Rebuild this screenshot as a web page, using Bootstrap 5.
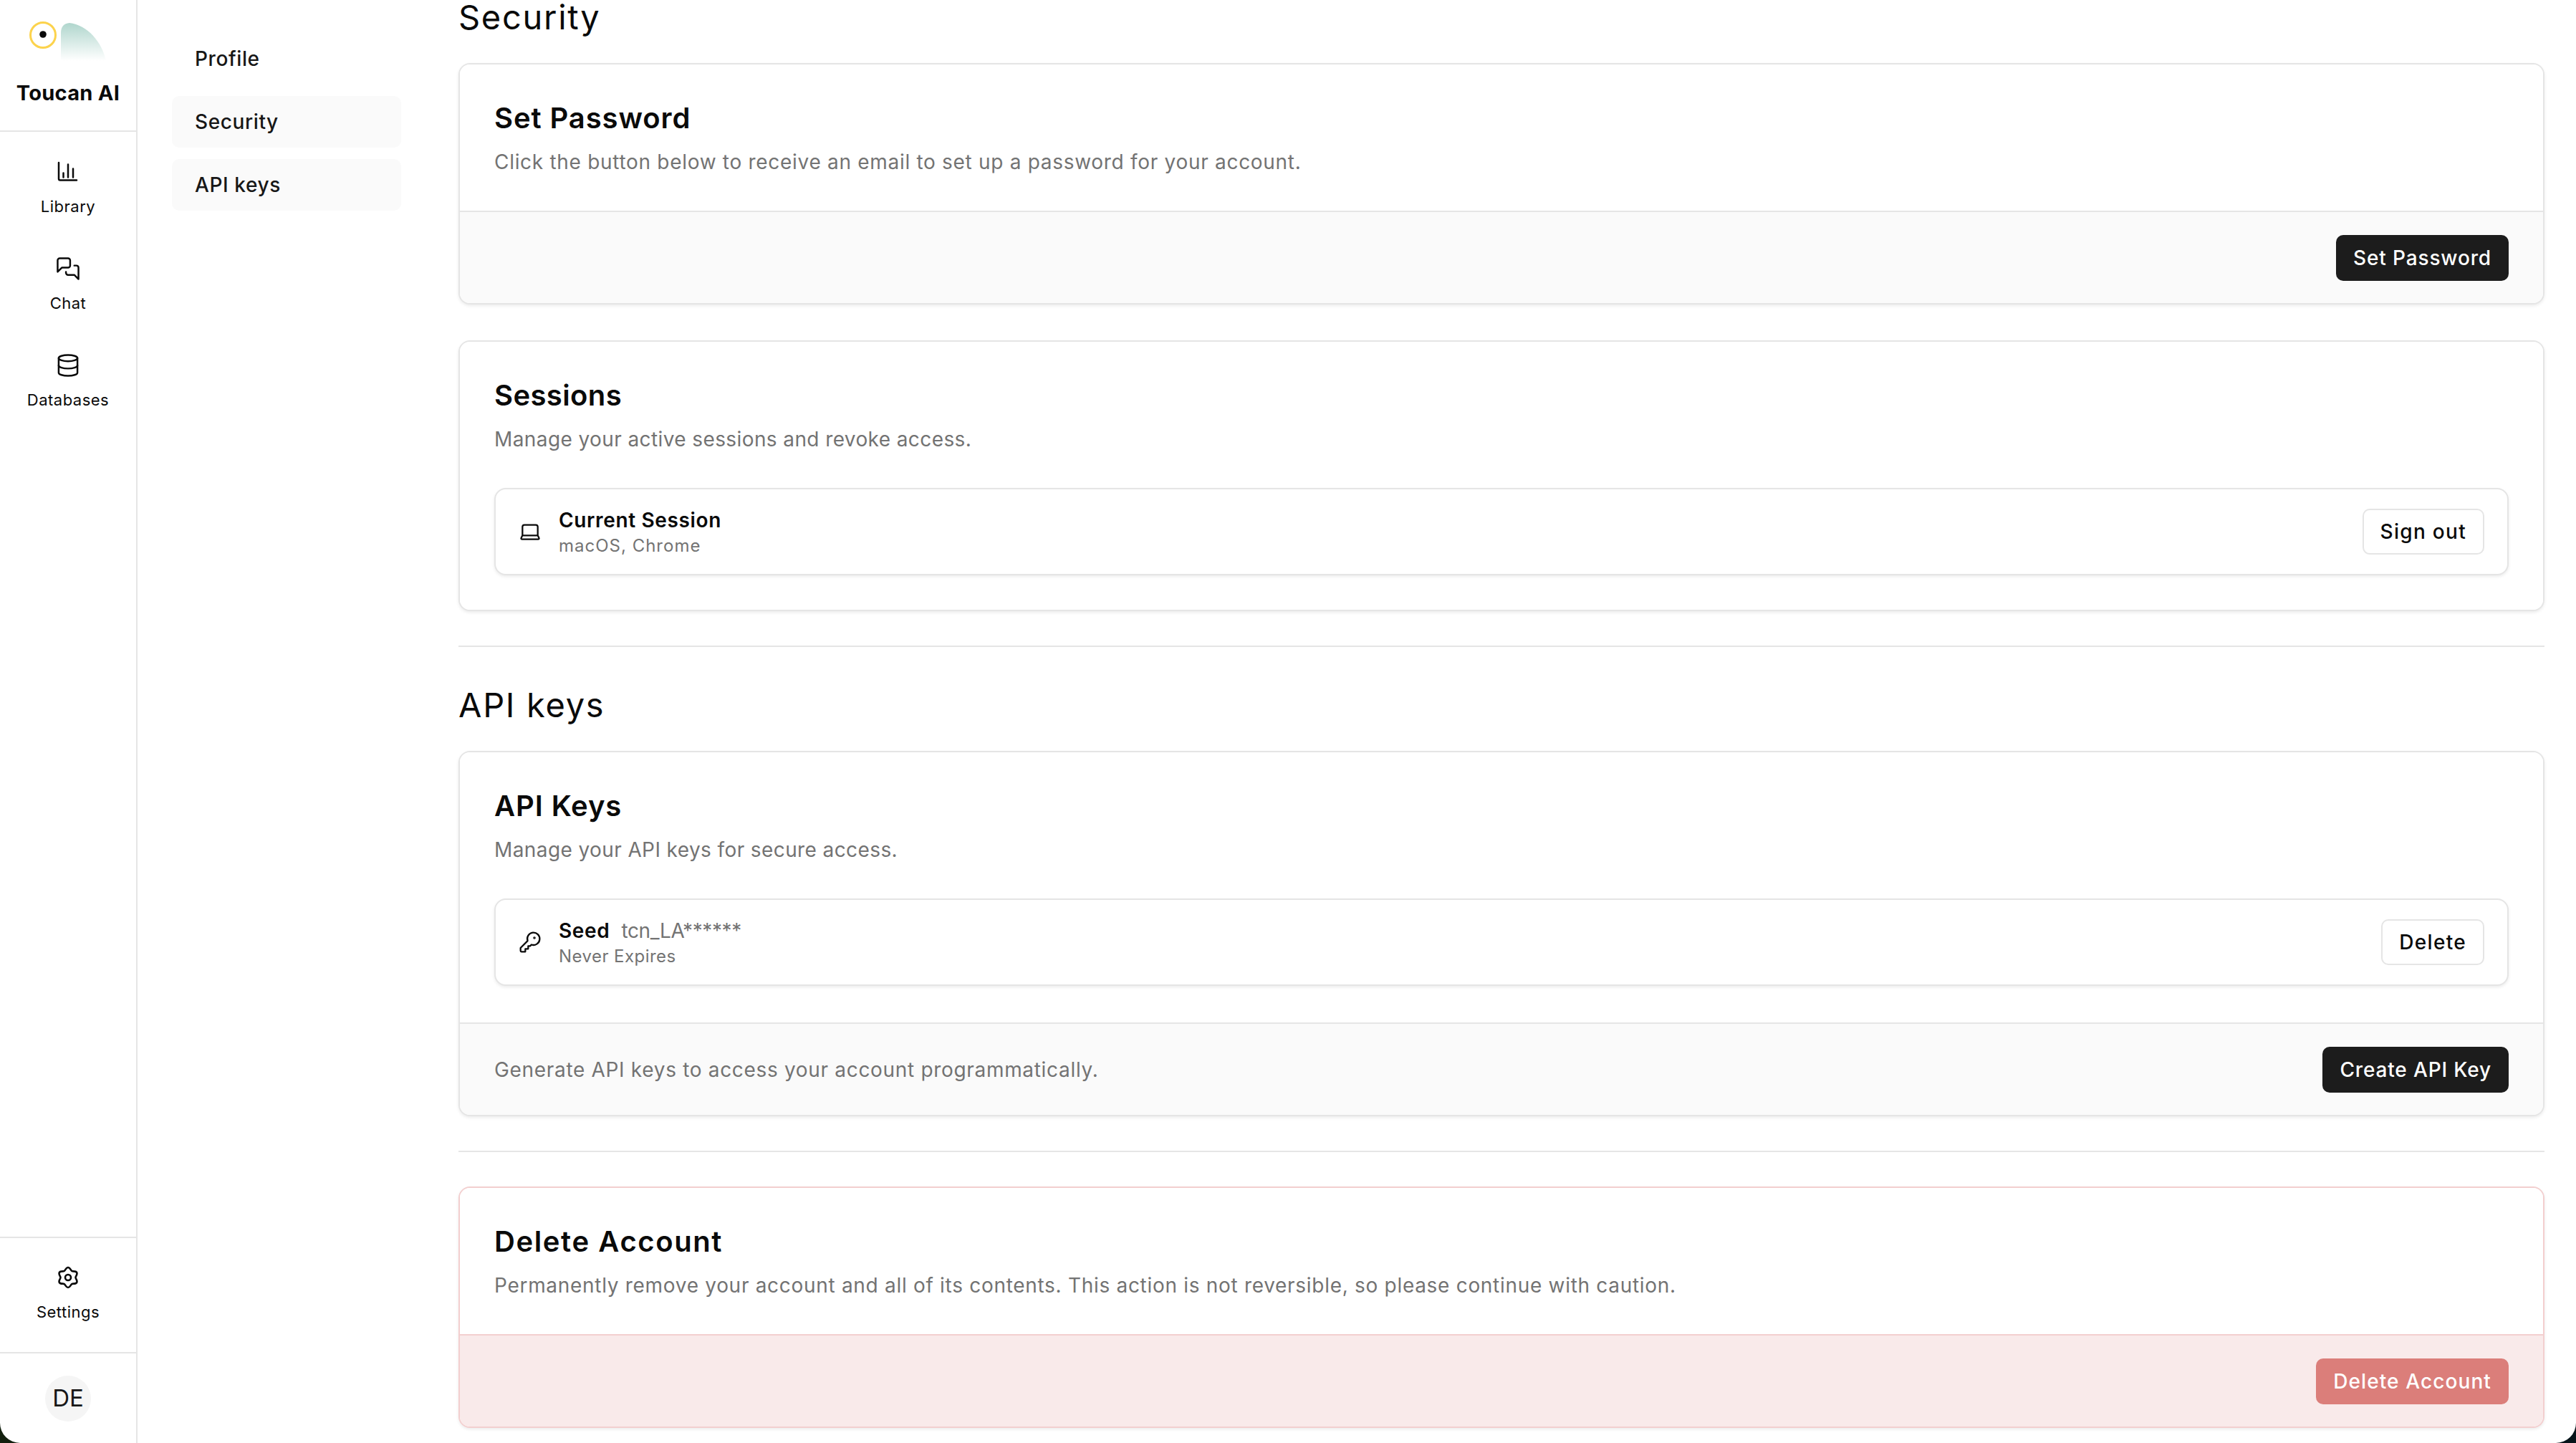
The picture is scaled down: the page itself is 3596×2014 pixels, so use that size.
<!DOCTYPE html>
<html lang="en">
<head>
<meta charset="utf-8">
<title>Toucan AI - Settings</title>
<link rel="stylesheet" href="https://cdn.jsdelivr.net/npm/bootstrap@5.3.0/dist/css/bootstrap.min.css">
<style>
html,body{height:2014px;margin:0;overflow:hidden}
body{background:linear-gradient(90deg,#13200f 0,#13200f 50%,#06141a 50%,#06141a 100%);font-family:Inter,"Liberation Sans",sans-serif;color:#0a0a0a}
.shell{height:2014px;background:#fff;border-radius:0 0 28px 28px;overflow:hidden}
.rail{width:192px;flex:none;border-right:2px solid #e5e5e5}
.rail-top{height:184px;border-bottom:2px solid #e5e5e5}
.logo-svg{display:block;margin-top:30px;margin-left:40px}
.brand{font-size:29px;font-weight:700;line-height:34px;text-align:center;margin-top:27px;letter-spacing:.3px;color:#0a0a0a}
.rail-nav{padding-top:40px;gap:56px}
.rail-item{gap:17px;color:#0a0a0a;text-decoration:none;font-size:22px;line-height:30px;letter-spacing:.5px}
.rail-item svg{width:32px;height:32px;fill:none;stroke:#0a0a0a;stroke-linecap:round;stroke-linejoin:round;display:block}
.rail-foot{border-top:2px solid #e5e5e5;padding:39px 0 41px}
.rail-user{border-top:2px solid #e5e5e5;padding:31px 0 30px}
.avatar{width:64px;height:64px;border-radius:50%;background:#f5f5f5;font-size:33px;color:#171717}
.subnav{width:448px;flex:none;padding:46px 80px 0 48px;gap:16px}
.subnav-item{height:72px;line-height:72px;padding-left:32px;border-radius:10px;font-size:28px;letter-spacing:.6px;color:#171717;text-decoration:none;display:block;font-weight:500}
.subnav-item.on{background:#fafafa}
.content{padding-right:44px;min-width:0}
.sec-title{font-size:47px;line-height:47px;height:47px;font-weight:400;margin:0;letter-spacing:1.7px}
.first-title{margin-bottom:41px}
.sec2-title{margin:57px 0 41px}
.panel{border:2px solid #e5e5e5;border-radius:16px;box-shadow:0 2px 4px rgba(0,0,0,.08);overflow:hidden;background:#fff;margin:0}
.panel-gap{margin-top:50px}
.panel-body{padding:48px;background:#fff;border:0}
.panel-body-tall{padding-bottom:51px}
.panel-title{font-size:40px;line-height:54px;font-weight:600;margin:0 0 15px;color:#0a0a0a;letter-spacing:.9px}
.ls-title-s{letter-spacing:.4px}
.ls-title-l{letter-spacing:1.6px}
.panel-desc{font-size:28px;line-height:39px;color:#737373;margin:0;letter-spacing:.7px}
.ls-desc-s{letter-spacing:.4px}
.panel-foot{height:129px;padding:0 48px;background:#fafafa;border-top:2px solid #e5e5e5;border-radius:0;color:#737373;font-size:28px;letter-spacing:.68px}
.item-row{height:122px;margin-top:48px;padding:0 32px;border:2px solid #e5e5e5;border-radius:16px;box-shadow:0 2px 4px rgba(0,0,0,.08);background:#fff}
.item-ico{width:32px;height:32px;flex:none;fill:none;stroke:#0a0a0a;stroke-linecap:round;stroke-linejoin:round;margin-right:24px;display:block}
.item-name{font-size:28px;line-height:40px;font-weight:600;color:#0a0a0a;letter-spacing:.65px}
.item-key{font-weight:400;color:#737373;margin-left:16px;letter-spacing:-.4px}
.item-sub{font-size:24px;line-height:32px;color:#737373;letter-spacing:1px}
.ls-sub-s{letter-spacing:.45px}
.act{height:64px;padding:0 24px;border-radius:10px;font-size:28px;font-weight:500;line-height:1;display:inline-flex;align-items:center;letter-spacing:.85px}
.act-dark{background:#1c1c1c;border:0;color:#fff}
.act-line{background:#fff;border:2px solid #e5e5e5;color:#0a0a0a;padding:0 23px;letter-spacing:1.3px}
.act-red{background:#db7e7a;border:0;color:#fff;letter-spacing:1.1px}
.rule{margin:48px 0 0;border:0;border-top:2px solid #e5e5e5;opacity:1}
.panel-danger{border-color:#f3cfcf}
.panel-danger .panel-foot{background:#f9eaea;border-top-color:#f3cfcf}
</style>
</head>
<body>
<div class="shell d-flex">
  <aside class="rail d-flex flex-column">
    <div class="rail-top">
      <svg class="logo-svg" width="110" height="56" viewBox="40 30 110 56" aria-hidden="true">
        <defs><linearGradient id="beak" x1="0" y1="0" x2="0" y2="1"><stop offset="0" stop-color="#b0d6cd"/><stop offset="1" stop-color="#ffffff"/></linearGradient></defs>
        <circle cx="60" cy="49" r="17.5" fill="none" stroke="#fcd34d" stroke-width="3"/>
        <circle cx="60" cy="48" r="4.8" fill="#0a0a0a"/>
        <path d="M85 85V46Q85 33 97 32C122 35 142 58 148 85Z" fill="url(#beak)"/>
      </svg>
      <div class="brand">Toucan AI</div>
    </div>
    <nav class="rail-nav d-flex flex-column flex-grow-1">
      <a class="rail-item d-flex flex-column align-items-center" href="#">
        <svg viewBox="0 0 32 32" stroke-width="2.5"><path d="M3 3V25.5a2 2 0 0 0 2 2H28"/><path d="M9.5 17.5V23.5M16 5.5V23.5M23 11.5V23.5"/></svg>
        <span>Library</span>
      </a>
      <a class="rail-item d-flex flex-column align-items-center" href="#">
        <svg viewBox="1 1 22 22" stroke-width="1.7"><path d="M14 9a2 2 0 0 1-2 2H6l-4 4V4a2 2 0 0 1 2-2h8a2 2 0 0 1 2 2z"/><path d="M18 9h2a2 2 0 0 1 2 2v11l-4-4h-6a2 2 0 0 1-2-2v-1"/></svg>
        <span>Chat</span>
      </a>
      <a class="rail-item d-flex flex-column align-items-center" href="#">
        <svg viewBox="1 1 22 22" stroke-width="1.7"><ellipse cx="12" cy="5" rx="9" ry="3"/><path d="M3 5V19A9 3 0 0 0 21 19V5"/><path d="M3 12A9 3 0 0 0 21 12"/></svg>
        <span>Databases</span>
      </a>
    </nav>
    <div class="rail-foot">
      <a class="rail-item d-flex flex-column align-items-center" href="#">
        <svg viewBox="0 0 32 32" stroke-width="2.6"><path d="M16 2C19 2 19.52 5.91 21.25 6.91C22.98 7.91 26.62 6.4 28.12 9C29.62 11.6 26.5 14 26.5 16C26.5 18 29.62 20.4 28.12 23C26.62 25.6 22.98 24.09 21.25 25.09C19.52 26.09 19 30 16 30C13 30 12.48 26.09 10.75 25.09C9.02 24.09 5.38 25.6 3.88 23C2.38 20.4 5.5 18 5.5 16C5.5 14 2.38 11.6 3.88 9C5.38 6.4 9.02 7.91 10.75 6.91C12.48 5.91 13 2 16 2Z"/><circle cx="16" cy="16" r="4"/></svg>
        <span>Settings</span>
      </a>
    </div>
    <div class="rail-user d-flex justify-content-center">
      <div class="avatar d-flex align-items-center justify-content-center">DE</div>
    </div>
  </aside>
  <nav class="subnav d-flex flex-column">
    <a class="subnav-item" href="#">Profile</a>
    <a class="subnav-item on" href="#">Security</a>
    <a class="subnav-item on" href="#">API keys</a>
  </nav>
  <main class="content flex-grow-1">
    <h2 class="sec-title first-title">Security</h2>
    <section class="card panel">
      <div class="card-body panel-body">
        <h3 class="panel-title">Set Password</h3>
        <p class="panel-desc">Click the button below to receive an email to set up a password for your account.</p>
      </div>
      <div class="card-footer panel-foot d-flex align-items-center justify-content-end">
        <button class="btn act act-dark" type="button">Set Password</button>
      </div>
    </section>
    <section class="card panel panel-gap">
      <div class="card-body panel-body">
        <h3 class="panel-title ls-title-s">Sessions</h3>
        <p class="panel-desc ls-desc-s">Manage your active sessions and revoke access.</p>
        <div class="item-row d-flex align-items-center">
          <svg class="item-ico" viewBox="0 0 24 24" stroke-width="1.7"><path d="M20 16V7a2 2 0 0 0-2-2H6a2 2 0 0 0-2 2v9m16 0H4m16 0 1.28 2.55a1 1 0 0 1-.9 1.45H3.62a1 1 0 0 1-.9-1.45L4 16"/></svg>
          <div class="flex-grow-1">
            <div class="item-name">Current Session</div>
            <div class="item-sub">macOS, Chrome</div>
          </div>
          <button class="btn act act-line" type="button">Sign out</button>
        </div>
      </div>
    </section>
    <hr class="rule">
    <h2 class="sec-title sec2-title">API keys</h2>
    <section class="card panel">
      <div class="card-body panel-body panel-body-tall">
        <h3 class="panel-title">API Keys</h3>
        <p class="panel-desc ls-desc-s">Manage your API keys for secure access.</p>
        <div class="item-row d-flex align-items-center">
          <svg class="item-ico" viewBox="0 0 24 24" stroke-width="1.7"><path d="M2 18v3c0 .6.4 1 1 1h4v-3h3v-3h2l1.4-1.4a6.5 6.5 0 1 0-4-4Z"/><circle cx="16.5" cy="7.5" r=".5"/></svg>
          <div class="flex-grow-1">
            <div class="item-name">Seed<span class="item-key">tcn_LA******</span></div>
            <div class="item-sub ls-sub-s">Never Expires</div>
          </div>
          <button class="btn act act-line" type="button">Delete</button>
        </div>
      </div>
      <div class="card-footer panel-foot d-flex align-items-center justify-content-between">
        <span>Generate API keys to access your account programmatically.</span>
        <button class="btn act act-dark" type="button">Create API Key</button>
      </div>
    </section>
    <hr class="rule">
    <section class="card panel panel-danger mt-5">
      <div class="card-body panel-body">
        <h3 class="panel-title ls-title-l">Delete Account</h3>
        <p class="panel-desc">Permanently remove your account and all of its contents. This action is not reversible, so please continue with caution.</p>
      </div>
      <div class="card-footer panel-foot d-flex align-items-center justify-content-end">
        <button class="btn act act-red" type="button">Delete Account</button>
      </div>
    </section>
  </main>
</div>
<script src="https://cdn.jsdelivr.net/npm/bootstrap@5.3.0/dist/js/bootstrap.bundle.min.js"></script>
</body>
</html>
